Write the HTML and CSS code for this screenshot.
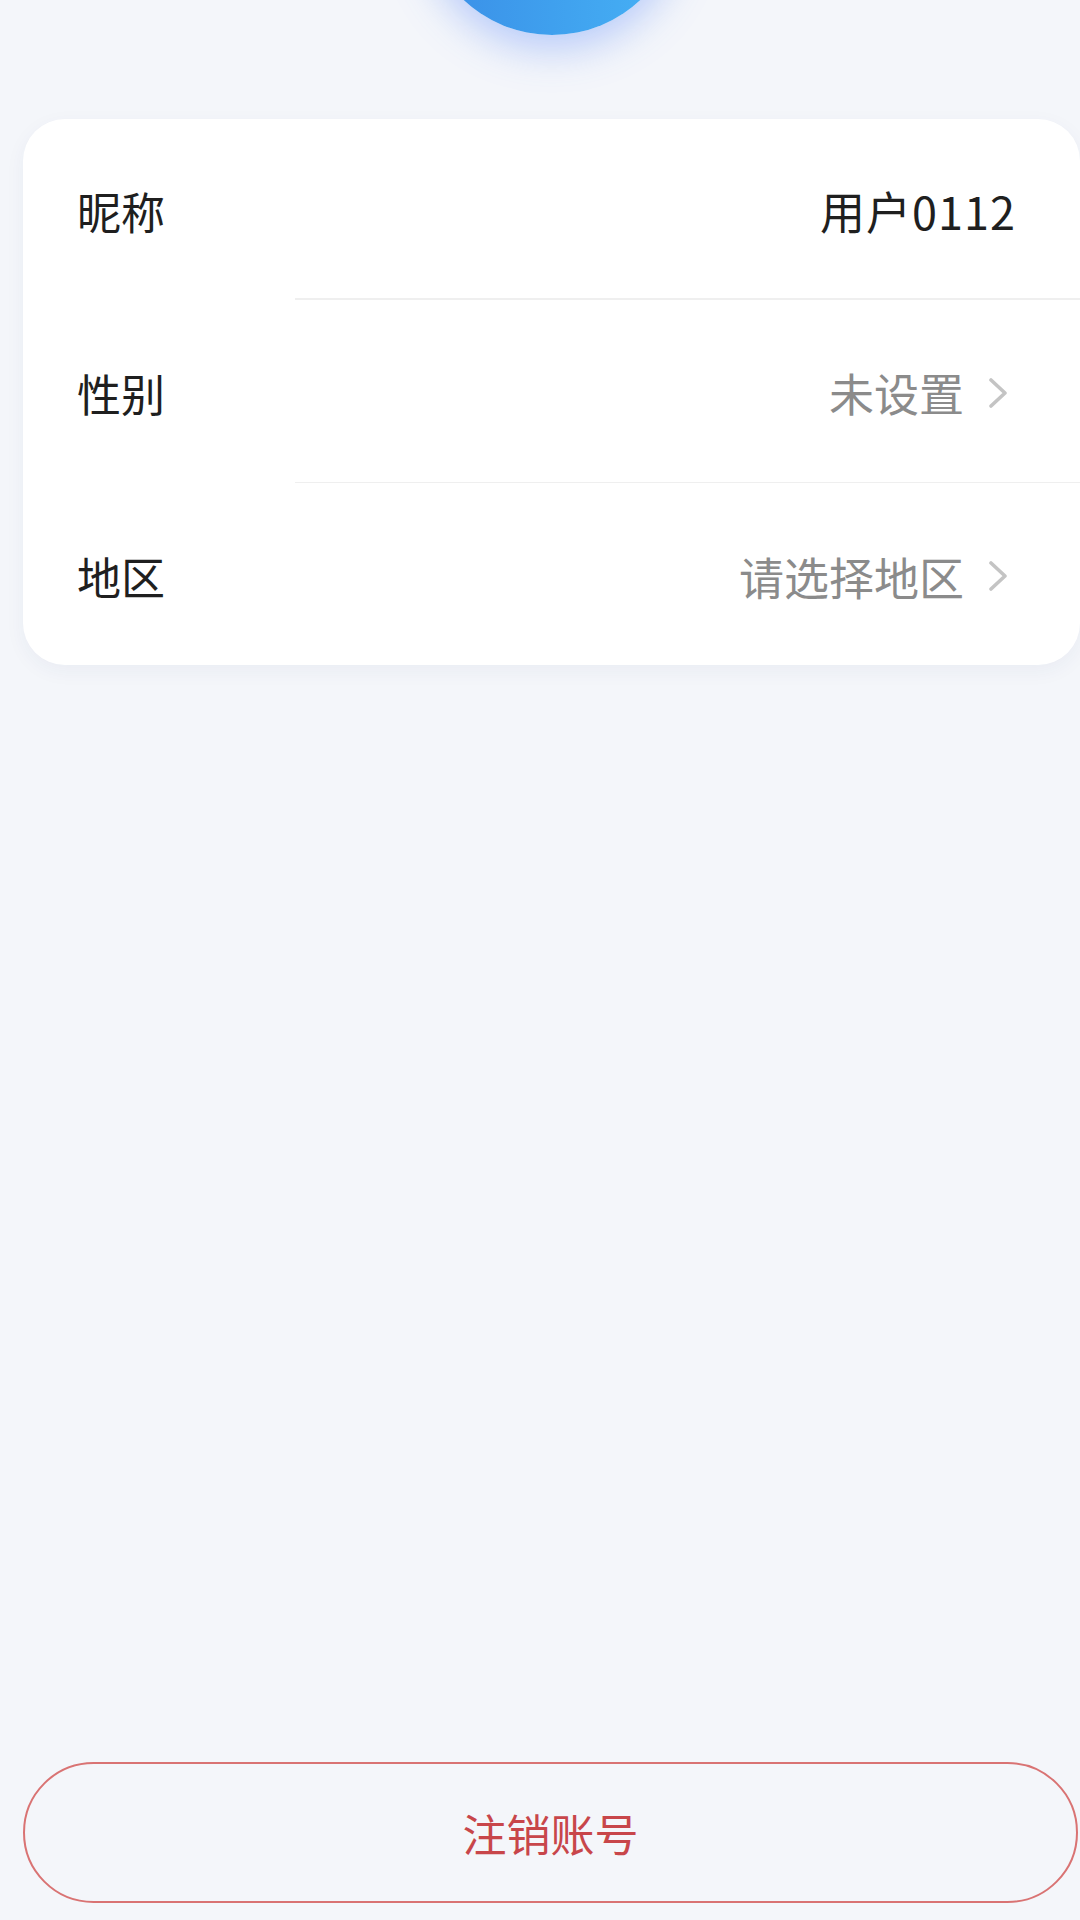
FILE: index.html
```html
<!DOCTYPE html>
<html lang="zh-CN">
<head>
<meta charset="utf-8">
<title>个人资料</title>
<link rel="stylesheet" href="styles.css">
</head>
<body>
<div class="page">
  <div class="avatar"></div>
  <div class="card">
    <div class="row row-first">
      <span class="label">昵称</span>
      <span class="value value-dark">用户0112</span>
    </div>
    <div class="sep"></div>
    <div class="row">
      <span class="label">性别</span>
      <span class="value">未设置</span>
      <svg class="chev" viewBox="0 0 18 30" width="18" height="30"><path d="M2 2 L16 15 L2 28" fill="none" stroke="#c4c4c4" stroke-width="3.6" stroke-linecap="round" stroke-linejoin="round"/></svg>
    </div>
    <div class="sep"></div>
    <div class="row">
      <span class="label">地区</span>
      <span class="value">请选择地区</span>
      <svg class="chev" viewBox="0 0 18 30" width="18" height="30"><path d="M2 2 L16 15 L2 28" fill="none" stroke="#c4c4c4" stroke-width="3.6" stroke-linecap="round" stroke-linejoin="round"/></svg>
    </div>
  </div>
  <button class="logout">注销账号</button>
</div>
</body>
</html>
```

FILE: styles.css
```css
html, body {
  margin: 0;
  padding: 0;
}
body {
  background: #f4f6fa;
  font-family: "Noto Sans CJK SC", "Noto Sans", sans-serif;
  overflow: hidden;
}
.page {
  box-sizing: border-box;
  min-height: 1920px;
  height: 1920px;
  padding: 0 0 17px 23px;
  display: flex;
  flex-direction: column;
  align-items: stretch;
}
.avatar {
  align-self: center;
  width: 258px;
  height: 258px;
  margin-top: -223px;
  flex-shrink: 0;
  border-radius: 50%;
  background: linear-gradient(90deg, #3a8de6 0%, #3fa0ee 50%, #47b3f6 100%);
  box-shadow: 0 14px 40px rgba(70, 120, 250, 0.35);
}
.card {
  margin-top: 84px;
  background: #ffffff;
  border-radius: 42px;
  box-shadow: 0 6px 20px rgba(40, 60, 110, 0.05);
  display: flex;
  flex-direction: column;
}
.row {
  height: 182px;
  display: flex;
  align-items: center;
  padding: 4px 64px 0 54px;
  box-sizing: border-box;
}
.row-first {
  height: 179px;
}
.label {
  font-size: 44px;
  color: #1f1f1f;
  flex: 1;
}
.value {
  font-size: 45px;
  color: #8b8b8b;
}
.value-dark {
  color: #1f1f1f;
  font-variant-numeric: tabular-nums;
  letter-spacing: 1px;
}
.chev {
  margin-left: 25px;
  margin-right: 9px;
  flex-shrink: 0;
}
.sep {
  height: 1.5px;
  background: #efefef;
  margin-left: 272px;
}
.logout {
  margin-top: auto;
  margin-right: 2px;
  height: 141px;
  border-radius: 71px;
  border: 2px solid #d97373;
  background: transparent;
  color: #c8464a;
  font-family: "Noto Sans CJK SC", "Noto Sans", sans-serif;
  font-size: 44px;
  letter-spacing: 0;
  cursor: pointer;
}
```
